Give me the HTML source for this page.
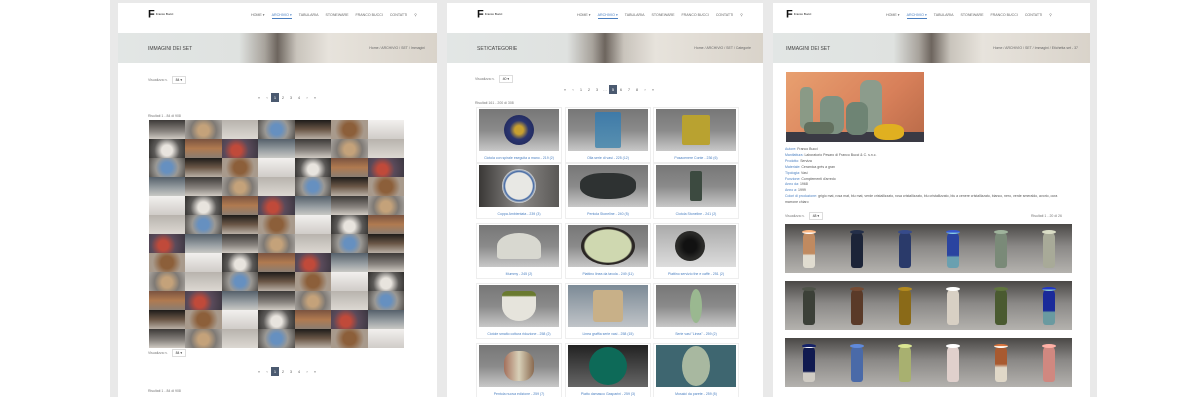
<!DOCTYPE html>
<html><head><meta charset="utf-8"><style>
*{margin:0;padding:0;box-sizing:border-box}
body{width:1200px;height:400px;background:#fff;position:relative;overflow:hidden;font-family:"Liberation Sans",sans-serif;color:#555}
.frame{position:absolute;left:110px;top:0;width:987px;height:397px;background:#e9e9e9}
.p{position:absolute;top:3px;height:394px;background:#fff;overflow:hidden}
.logo{position:absolute;left:30px;top:6px;font:bold 11px "Liberation Sans",sans-serif;color:#111;line-height:11px}
.logo small{font-size:3px;font-weight:normal;vertical-align:middle;margin-left:1px}
.nav{position:absolute;top:10px;font-size:3.6px;color:#666;white-space:nowrap;word-spacing:0}
.nav span{margin-right:7px}
.nav .a{color:#4a7fc0;border-bottom:1px solid #4a7fc0;padding-bottom:1px}
.ban{position:absolute;left:0;right:0;top:30px;height:30px;background:linear-gradient(90deg,#e2e6e5 0%,#dfe2e0 38%,#a8a39c 46%,#6d655e 50%,#c9c4bc 56%,#e7e3dc 66%,#d9d3ca 100%)}
.ban b{position:absolute;left:30px;top:13px;font-size:5px;font-weight:normal;color:#444}
.ban i{position:absolute;right:12px;top:13px;font-size:3.5px;font-style:normal;color:#666}
.t{position:absolute;font-size:3.5px;color:#777;white-space:nowrap}
.sel{display:inline-block;border:1px solid #ddd;padding:1px 3px;margin-left:3px;color:#333}
.pg{position:absolute;font-size:4px;color:#666;white-space:nowrap}
.pg span{display:inline-block;width:8px;text-align:center}
.pg .on{background:#4b5a70;color:#fff;height:9px;line-height:9px}
.grid{position:absolute;left:31px;top:117px;width:255px;height:228px;display:grid;grid-template-columns:repeat(7,1fr);grid-template-rows:repeat(12,1fr)}
.grid i:nth-child(11n+1){background:linear-gradient(#3d3a38,#8a8580 60%,#cfc9c2)}
.grid i:nth-child(11n+2){background:radial-gradient(circle at 50% 55%,#c4a27a 25%,#7f7a75 60%,#a9a5a0)}
.grid i:nth-child(11n+3){background:linear-gradient(#b8b3ad,#dcd8d2)}
.grid i:nth-child(11n+4){background:radial-gradient(circle at 50% 50%,#6690c0 25%,#9a9894 55%,#54504c)}
.grid i:nth-child(11n+5){background:linear-gradient(#1e1c1a,#6a5646 50%,#b8afa5)}
.grid i:nth-child(11n+6){background:radial-gradient(circle,#8c5f3a 30%,#a89a8c 70%)}
.grid i:nth-child(11n+7){background:linear-gradient(#f2f0ee,#d0ccc8)}
.grid i:nth-child(11n+8){background:radial-gradient(circle at 50% 60%,#e8e4de 25%,#5c5a58 60%,#2e2c2a)}
.grid i:nth-child(11n+9){background:linear-gradient(#7a5340,#b07a50 50%,#8a7d72)}
.grid i:nth-child(11n+10){background:radial-gradient(circle at 40% 60%,#c04a3a 20%,#5a4a5a 50%,#3a3640)}
.grid i:nth-child(11n+11){background:linear-gradient(#55606a,#9aa0a4 60%,#c8c8c4)}
.card{position:absolute;width:86px;height:56px;border:1px solid #eee}
.card .im{position:absolute;left:2px;top:1px;right:2px;height:42px;background:linear-gradient(#777,#8a8a8a 50%,#c8c8c8);overflow:hidden}
.card .im u{position:absolute;left:50%;top:50%;transform:translate(-50%,-50%)}
.card p{position:absolute;left:0;right:0;top:48px;text-align:center;font-size:3.5px;color:#4a7fc0}
.v{position:absolute;width:48px;height:49px;background:linear-gradient(#4a4846,#8a8886 45%,#b4b2ae);overflow:hidden}
.v u{position:absolute;left:18px;top:8px;width:12px;height:36px;border-radius:5px 5px 3px 3px}
.v u:before{content:"";position:absolute;left:-1px;top:-2px;width:14px;height:4px;border-radius:50%;background:inherit;filter:brightness(1.3)}
.meta{position:absolute;left:12px;top:144px;font-size:3.5px;line-height:5.9px;color:#555;width:290px}
.meta em{font-style:normal;color:#4a7fc0}
</style></head><body>
<div class="frame"></div>

<!-- Panel 1 -->
<div class="p" style="left:118px;width:319px">
 <div class="logo">F<small>Franco Bucci</small></div>
 <div class="nav" style="left:133px"><span>HOME ▾</span><span class="a">ARCHIVIO ▾</span><span>TABULARIA</span><span>STONEWARE</span><span>FRANCO BUCCI</span><span>CONTATTI</span><span>⚲</span></div>
 <div class="ban"><b>IMMAGINI DEI SET</b><i>Home / ARCHIVIO / SET / Immagini</i></div>
 <div class="t" style="left:30px;top:73px">Visualizza n. <span class="sel">84 ▾</span></div>
 <div class="pg" style="left:137px;top:90px"><span>«</span><span>‹</span><span class="on">1</span><span>2</span><span>3</span><span>4</span><span>›</span><span>»</span></div>
 <div class="t" style="left:30px;top:111px">Risultati 1 - 84 di 908</div>
 <div class="grid"><i></i><i></i><i></i><i></i><i></i><i></i><i></i><i></i><i></i><i></i><i></i><i></i><i></i><i></i><i></i><i></i><i></i><i></i><i></i><i></i><i></i><i></i><i></i><i></i><i></i><i></i><i></i><i></i><i></i><i></i><i></i><i></i><i></i><i></i><i></i><i></i><i></i><i></i><i></i><i></i><i></i><i></i><i></i><i></i><i></i><i></i><i></i><i></i><i></i><i></i><i></i><i></i><i></i><i></i><i></i><i></i><i></i><i></i><i></i><i></i><i></i><i></i><i></i><i></i><i></i><i></i><i></i><i></i><i></i><i></i><i></i><i></i><i></i><i></i><i></i><i></i><i></i><i></i><i></i><i></i><i></i><i></i><i></i><i></i></div>
 <div class="t" style="left:30px;top:346px">Visualizza n. <span class="sel">84 ▾</span></div>
 <div class="pg" style="left:137px;top:364px"><span>«</span><span>‹</span><span class="on">1</span><span>2</span><span>3</span><span>4</span><span>›</span><span>»</span></div>
 <div class="t" style="left:30px;top:386px">Risultati 1 - 84 di 908</div>
</div>

<!-- Panel 2 -->
<div class="p" style="left:447px;width:316px">
 <div class="logo">F<small>Franco Bucci</small></div>
 <div class="nav" style="left:130px"><span>HOME ▾</span><span class="a">ARCHIVIO ▾</span><span>TABULARIA</span><span>STONEWARE</span><span>FRANCO BUCCI</span><span>CONTATTI</span><span>⚲</span></div>
 <div class="ban"><b>SET/CATEGORIE</b><i>Home / ARCHIVIO / SET / Categorie</i></div>
 <div class="t" style="left:28px;top:72px">Visualizza n. <span class="sel">40 ▾</span></div>
 <div class="pg" style="left:114px;top:82px"><span>«</span><span>‹</span><span>1</span><span>2</span><span>3</span><span>…</span><span class="on">5</span><span>6</span><span>7</span><span>8</span><span>›</span><span>»</span></div>
 <div class="t" style="left:28px;top:98px">Risultati 161 - 200 di 308</div>

 <div class="card" style="left:29px;top:104px"><div class="im"><u style="width:30px;height:30px;border-radius:50%;background:radial-gradient(#c8a030 20%,#2a3570 45%,#1c2250)"></u></div><p>Ciotola con spirale eseguita a mano - 219 (2)</p></div>
 <div class="card" style="left:118px;top:104px"><div class="im"><u style="width:26px;height:36px;border-radius:2px;background:linear-gradient(#3f7aa8,#5890b0)"></u></div><p>Olla serie di vasi - 225 (12)</p></div>
 <div class="card" style="left:206px;top:104px"><div class="im"><u style="width:28px;height:30px;border-radius:2px;background:#b9a230"></u></div><p>Posacenere Conte - 236 (6)</p></div>

 <div class="card" style="left:29px;top:160px"><div class="im" style="background:linear-gradient(90deg,#3a3836,#8a8886 50%,#5a5856)"><u style="width:34px;height:34px;border-radius:50%;background:radial-gradient(#e8e8e4 55%,#3b62a0 60%,#d8d8d4 70%)"></u></div><p>Coppa Ambientata - 239 (3)</p></div>
 <div class="card" style="left:118px;top:160px"><div class="im"><u style="width:56px;height:26px;border-radius:40% 40% 45% 45%;background:#2e3232"></u></div><p>Pentola Stoneline - 240 (5)</p></div>
 <div class="card" style="left:206px;top:160px"><div class="im"><u style="width:12px;height:30px;border-radius:2px;background:#3c4a40"></u></div><p>Ciotola Stoneline - 241 (2)</p></div>

 <div class="card" style="left:29px;top:220px"><div class="im"><u style="width:44px;height:26px;border-radius:50% 50% 10% 10%;background:#d8d8d0"></u></div><p>Mummy - 245 (2)</p></div>
 <div class="card" style="left:118px;top:220px"><div class="im"><u style="width:54px;height:38px;border-radius:50%;background:radial-gradient(#cfd8b0 60%,#2a2624 64%)"></u></div><p>Piattino linea da tavola - 249 (11)</p></div>
 <div class="card" style="left:206px;top:220px"><div class="im" style="background:linear-gradient(#aaa,#ddd)"><u style="width:30px;height:30px;border-radius:50%;background:radial-gradient(#111 30%,#2a2a28 60%);transform:translate(-70%,-50%)"></u></div><p>Piattino servizio the e caffè - 251 (2)</p></div>

 <div class="card" style="left:29px;top:280px"><div class="im"><u style="width:34px;height:30px;border-radius:15% 15% 50% 50%;background:linear-gradient(#6a7a30 15%,#e6e4dc 20%)"></u></div><p>Ciotole smalto cottura riduzione - 258 (2)</p></div>
 <div class="card" style="left:118px;top:280px"><div class="im" style="background:linear-gradient(#7c8a96,#c0c4c8)"><u style="width:30px;height:32px;border-radius:3px;background:#c8b088"></u></div><p>Linea graffia serie vasi - 258 (15)</p></div>
 <div class="card" style="left:206px;top:280px"><div class="im"><u style="width:12px;height:34px;border-radius:50%;background:#9ab890"></u></div><p>Serie vasi "Linea" - 259 (2)</p></div>

 <div class="card" style="left:29px;top:340px"><div class="im"><u style="width:30px;height:30px;border-radius:40%;background:linear-gradient(90deg,#a4705c,#d8d0b8 50%,#8a6a50)"></u></div><p>Pentola nuova edizione - 259 (7)</p></div>
 <div class="card" style="left:118px;top:340px"><div class="im" style="background:linear-gradient(#222,#666)"><u style="width:38px;height:38px;border-radius:50%;background:#0d6a58"></u></div><p>Piatto damasco Gasparini - 259 (3)</p></div>
 <div class="card" style="left:206px;top:340px"><div class="im" style="background:#3e6670"><u style="width:28px;height:40px;border-radius:50%;background:#a8b8a0"></u></div><p>Mosaici da parete - 259 (5)</p></div>
</div>

<!-- Panel 3 -->
<div class="p" style="left:773px;width:317px">
 <div class="logo" style="left:13px">F<small>Franco Bucci</small></div>
 <div class="nav" style="left:113px"><span>HOME ▾</span><span class="a">ARCHIVIO ▾</span><span>TABULARIA</span><span>STONEWARE</span><span>FRANCO BUCCI</span><span>CONTATTI</span><span>⚲</span></div>
 <div class="ban"><b style="left:13px">IMMAGINI DEI SET</b><i>Home / ARCHIVIO / SET / Immagini / Etichetta set - 37</i></div>
 <div style="position:absolute;left:13px;top:69px;width:138px;height:70px;background:linear-gradient(135deg,#e8a070,#d8805a 60%,#b86a48);overflow:hidden">
  <div style="position:absolute;left:0;right:0;bottom:0;height:10px;background:#3a3a44"></div>
  <div style="position:absolute;left:14px;top:15px;width:13px;height:42px;border-radius:5px;background:#8a9a86"></div>
  <div style="position:absolute;left:34px;top:24px;width:24px;height:38px;border-radius:8px;background:#7e9282"></div>
  <div style="position:absolute;left:74px;top:8px;width:22px;height:52px;border-radius:8px;background:#8c9c8c"></div>
  <div style="position:absolute;left:60px;top:30px;width:22px;height:33px;border-radius:8px;background:#6e8474"></div>
  <div style="position:absolute;left:18px;top:50px;width:30px;height:12px;border-radius:5px;background:#62705e"></div>
  <div style="position:absolute;left:88px;top:52px;width:30px;height:16px;border-radius:40%;background:#e0b020"></div>
 </div>
 <div class="meta"><em>Autore:</em> Franco Bucci<br><em>Manifattura:</em> Laboratorio Pesaro di Franco Bucci &amp; C. s.n.c.<br><em>Prodotto:</em> Serviza<br><em>Materiale:</em> Ceramica grès a gran<br><em>Tipologia:</em> Vasi<br><em>Funzione:</em> Complementi d'arredo<br><em>Anno da:</em> 1968<br><em>Anno a:</em> 1999<br><em>Colori di produzione:</em> grigio mat, rosa mat, blu mat, verde cristallizzato, rosa cristallizzato, blu cristallizzato, blu a cenere cristallizzato, bianco, nero, verde smeraldo, avorio, ocra<br>marrone chiaro</div>
 <div class="t" style="left:12px;top:209px">Visualizza n. <span class="sel">48 ▾</span></div>
 <div class="t" style="left:258px;top:211px">Risultati 1 - 20 di 26</div>

 <div class="v" style="left:12px;top:221px"><u style="background:linear-gradient(#c08a60 60%,#e0dcd0 65%)"></u></div>
 <div class="v" style="left:60px;top:221px"><u style="background:#1c2438"></u></div>
 <div class="v" style="left:108px;top:221px"><u style="background:#2a3a6a"></u></div>
 <div class="v" style="left:156px;top:221px"><u style="background:linear-gradient(#2a44a0 65%,#6aa0b0 70%)"></u></div>
 <div class="v" style="left:204px;top:221px"><u style="background:#7a8a78"></u></div>
 <div class="v" style="left:252px;top:221px;width:47px"><u style="background:#a8aa98"></u></div>

 <div class="v" style="left:12px;top:278px"><u style="background:#3c4038"></u></div>
 <div class="v" style="left:60px;top:278px"><u style="background:#5a3a28"></u></div>
 <div class="v" style="left:108px;top:278px"><u style="background:#8a6a18"></u></div>
 <div class="v" style="left:156px;top:278px"><u style="background:#d8d0c4"></u></div>
 <div class="v" style="left:204px;top:278px"><u style="background:#4a5a30"></u></div>
 <div class="v" style="left:252px;top:278px;width:47px"><u style="background:linear-gradient(#1a2a9a 60%,#6a9aa0 65%)"></u></div>

 <div class="v" style="left:12px;top:335px"><u style="background:linear-gradient(#101a50 70%,#d0ccc4 75%)"></u></div>
 <div class="v" style="left:60px;top:335px"><u style="background:#4a6aa8"></u></div>
 <div class="v" style="left:108px;top:335px"><u style="background:#a8b070"></u></div>
 <div class="v" style="left:156px;top:335px"><u style="background:#e0d0cc"></u></div>
 <div class="v" style="left:204px;top:335px"><u style="background:linear-gradient(#a85a30 50%,#e0d8c8 60%)"></u></div>
 <div class="v" style="left:252px;top:335px;width:47px"><u style="background:#d08880"></u></div>
</div>
</body></html>
